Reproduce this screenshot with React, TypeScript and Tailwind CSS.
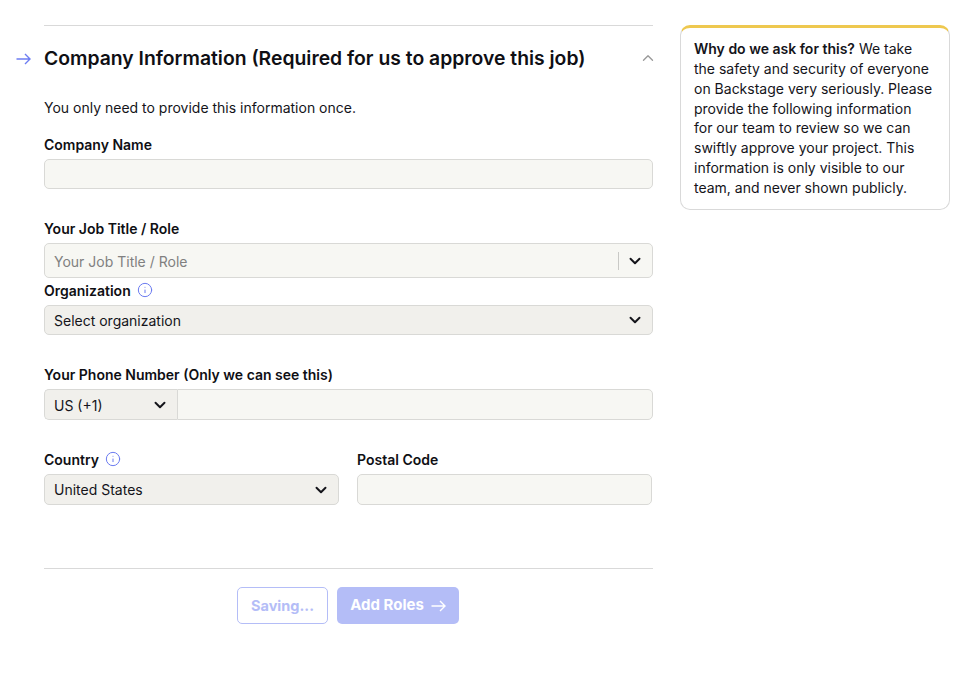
import React from 'react';
import { ChevronDown, ChevronUp, Info } from 'lucide-react';

const inputCls = 'block w-full rounded-[5px] border border-[#d9d9d6] bg-[#f7f7f3]';
const selectCls = 'flex items-center justify-between rounded-[5px] border border-[#d9d9d6] bg-[#f1f0ec] text-[#14141a]';

const Arrow = ({ className }: { className: string }) => (
  <svg width="15" height="12" viewBox="0 0 15 12" fill="none" stroke="currentColor" strokeWidth="1.4" className={className}>
    <path d="M0.5 6h13.5M9 1l5 5-5 5" />
  </svg>
);

const Label = ({ children, info }: { children: React.ReactNode; info?: boolean }) => (
  <div className="flex h-[20px] items-center gap-[6px] pb-[2px] text-[14px] font-semibold text-[#0f0f14]">
    <span>{children}</span>
    {info && <Info size={16} strokeWidth={1.5} className="text-[#6b7bf0]" />}
  </div>
);

export default function App() {
  return (
    <div className="flex h-[683px] overflow-hidden bg-white pl-[44px] pt-[25px] font-['Inter',sans-serif] text-[14px] text-[#14141a]">
      <main className="w-[609px] shrink-0">
        <div className="border-t border-[#d9d9d9]" />

        <div className="relative mt-[17px] flex h-[32px] items-center justify-between">
          <Arrow className="absolute -left-[28px] top-[10px] text-[#6d7df2]" />
          <h2 className="text-[19.35px] font-semibold text-[#0f0f14]">Company Information (Required for us to approve this job)</h2>
          <ChevronUp size={18} strokeWidth={1.8} className="mr-[-4px] mb-[2px] text-[#9a9a9a]" />
        </div>

        <p className="mt-[23px] h-[20px] leading-[20px]">You only need to provide this information once.</p>

        <div className="mt-[17px]">
          <Label>Company Name</Label>
          <div className={`${inputCls} mt-[4px] h-[30px]`} />
        </div>

        <div className="mt-[30px]">
          <Label>Your Job Title / Role</Label>
          <div className="mt-[4px] flex h-[35px] items-center rounded-[5px] border border-[#d9d9d6] bg-[#f7f7f3] pl-[9px] pr-[8px]">
            <span className="flex-1 pt-[2px] text-[#808080]">Your Job Title / Role</span>
            <span className="mr-[7px] h-[18px] w-px bg-[#c9c9c6]" />
            <ChevronDown size={18} strokeWidth={2.6} className="text-[#14141a]" />
          </div>
        </div>

        <div className="mt-[3px]">
          <Label info>Organization</Label>
          <div className={`${selectCls} mt-[4px] h-[30px] pl-[9px] pr-[8px]`}>
            <span>Select organization</span>
            <ChevronDown size={18} strokeWidth={2.6} />
          </div>
        </div>

        <div className="mt-[30px]">
          <Label>Your Phone Number (Only we can see this)</Label>
          <div className="mt-[4px] flex h-[31px]">
            <div className={`${selectCls} w-[133px] rounded-r-none border-r-0 pl-[9px] pr-[8px]`}>
              <span className="pt-[2px]">US (+1)</span>
              <ChevronDown size={18} strokeWidth={2.6} />
            </div>
            <div className="flex-1 rounded-r-[5px] border border-[#d9d9d6] bg-[#f7f7f3]" />
          </div>
        </div>

        <div className="mt-[30px] flex gap-[18px]">
          <div className="w-[295px]">
            <Label info>Country</Label>
            <div className={`${selectCls} mt-[4px] h-[31px] pl-[9px] pr-[8px]`}>
              <span>United States</span>
              <ChevronDown size={18} strokeWidth={2.6} />
            </div>
          </div>
          <div className="w-[295px]">
            <Label>Postal Code</Label>
            <div className={`${inputCls} mt-[4px] h-[31px]`} />
          </div>
        </div>

        <div className="mt-[63px] border-t border-[#d9d9d9]" />

        <div className="mt-[18px] flex gap-[9px] pl-[193px]">
          <button className="h-[37px] w-[91px] rounded-[5px] border border-[#b4bdf7] bg-white text-[14.5px] font-bold text-[#b4bdf7]">Saving...</button>
          <button className="flex h-[37px] w-[122px] items-center justify-center gap-[7px] rounded-[5px] bg-[#b4bdf7] text-[15px] font-bold text-white">
            Add Roles
            <Arrow className="" />
          </button>
        </div>
      </main>

      <aside className="ml-[27px] h-[185px] w-[270px] shrink-0 rounded-[10px] border border-t-[3px] border-[#d9d9d9] border-t-[#eec84f] bg-white pl-[13px] pr-[14px] pt-[11px] text-[14px] leading-[19.85px] text-[#14141a]">
        <strong className="font-semibold">Why do we ask for this?</strong> We take<br />
        the safety and security of everyone<br />
        on Backstage very seriously. Please<br />
        provide the following information<br />
        for our team to review so we can<br />
        swiftly approve your project. This<br />
        information is only visible to our<br />
        team, and never shown publicly.
      </aside>
    </div>
  );
}
